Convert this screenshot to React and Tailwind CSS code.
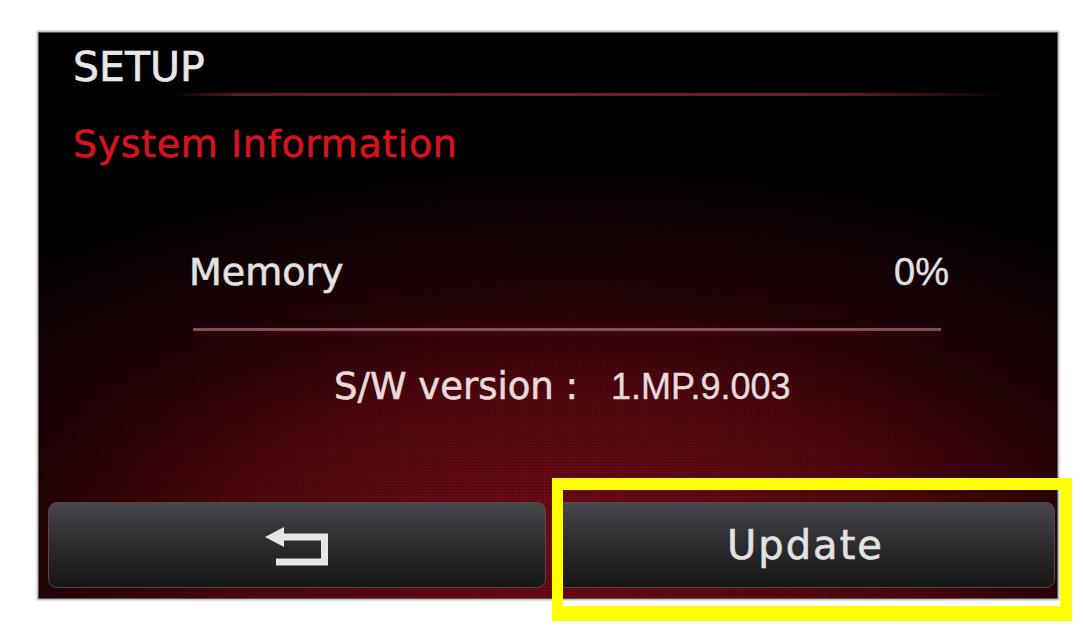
import React from 'react';

const dejavu = "font-['DejaVu_Sans',sans-serif] [-webkit-text-stroke:0.6px_currentColor]";
const arial = "font-['Liberation_Sans',Arial,sans-serif] [-webkit-text-stroke:0.4px_currentColor]";

function BackIcon() {
  return (
    <svg width="64" height="41" viewBox="0 0 64 41" fill="none">
      <polygon points="0,12 19,2 19,22" fill="#e6e6e6" />
      <path d="M17 12 H59.5 V37 H11" stroke="#e6e6e6" strokeWidth="7" strokeLinejoin="miter" />
    </svg>
  );
}

export default function App() {
  return (
    <div className="relative w-[1085px] h-[629px] bg-white pl-[38px] pt-[32px] overflow-hidden">
      <div className="w-[1020px] h-[567px] flex flex-col border border-[#5a5a5a] shadow-[0_0_2px_1px_rgba(0,0,0,0.35)] bg-black [background-image:repeating-linear-gradient(0deg,rgba(0,0,0,0.16)_0_1px,transparent_1px_3px),repeating-linear-gradient(90deg,rgba(0,0,0,0.16)_0_1px,transparent_1px_3px),radial-gradient(ellipse_82%_68%_at_52%_90%,#7a0c1a_0%,#56070f_38%,#220205_66%,#000_100%)]">
        <div className={`${dejavu} mt-[14px] ml-[34px] text-[41px] leading-none text-[#e8e8e8]`}>SETUP</div>

        <div className="mt-[5px] ml-[132px] w-[840px] h-[3px] bg-[linear-gradient(90deg,rgba(90,70,75,0)_0%,#5e1a22_8%,#7a1c27_45%,#6a1a24_80%,rgba(90,60,65,0)_100%)]" />

        <div className={`${dejavu} mt-[29px] ml-[34px] text-[38px] leading-none tracking-[0.6px] text-[#d8131e]`}>System Information</div>

        <div className="mt-[90px] ml-[150px] w-[760px] flex items-baseline justify-between">
          <span className={`${dejavu} text-[38px] leading-none text-[#e2e2e2]`}>Memory</span>
          <span className={`${arial} text-[38px] leading-none text-[#e2e2e2]`}>0%</span>
        </div>

        <div className="mt-[37px] ml-[154px] w-[748px] h-[3px] bg-[#7e5058] shadow-[0_2px_6px_rgba(120,20,30,0.6)]" />

        <div className="mt-[37px] ml-[295px] flex items-baseline">
          <span className={`${dejavu} text-[37px] leading-none text-[#ead9da]`}>S/W version :</span>
          <span className={`${arial} ml-[33px] text-[36px] leading-none text-[#ead9da]`}>1.MP.9.003</span>
        </div>

        <div className="flex-1" />

        <div className="ml-[9px] mb-[10px] flex gap-[10px]">
          <button className="w-[498px] h-[86px] flex items-center justify-center rounded-[9px] border border-[#5b454c] bg-[linear-gradient(180deg,#48474c_0%,#2e2e31_45%,#161616_100%)]">
            <BackIcon />
          </button>
          <button className={`${dejavu} w-[499px] h-[86px] flex items-center justify-center rounded-[9px] border border-[#5b454c] bg-[linear-gradient(180deg,#48474c_0%,#2e2e31_45%,#161616_100%)] text-[40px] tracking-[2px] text-[#e2e2e2] leading-none`}>
            Update
          </button>
        </div>
      </div>

      <div className="absolute left-[552px] top-[478px] w-[520px] h-[143px] border-t-[12px] border-l-[11px] border-r-[12px] border-b-[15px] border-[#ffff00]" />
    </div>
  );
}
